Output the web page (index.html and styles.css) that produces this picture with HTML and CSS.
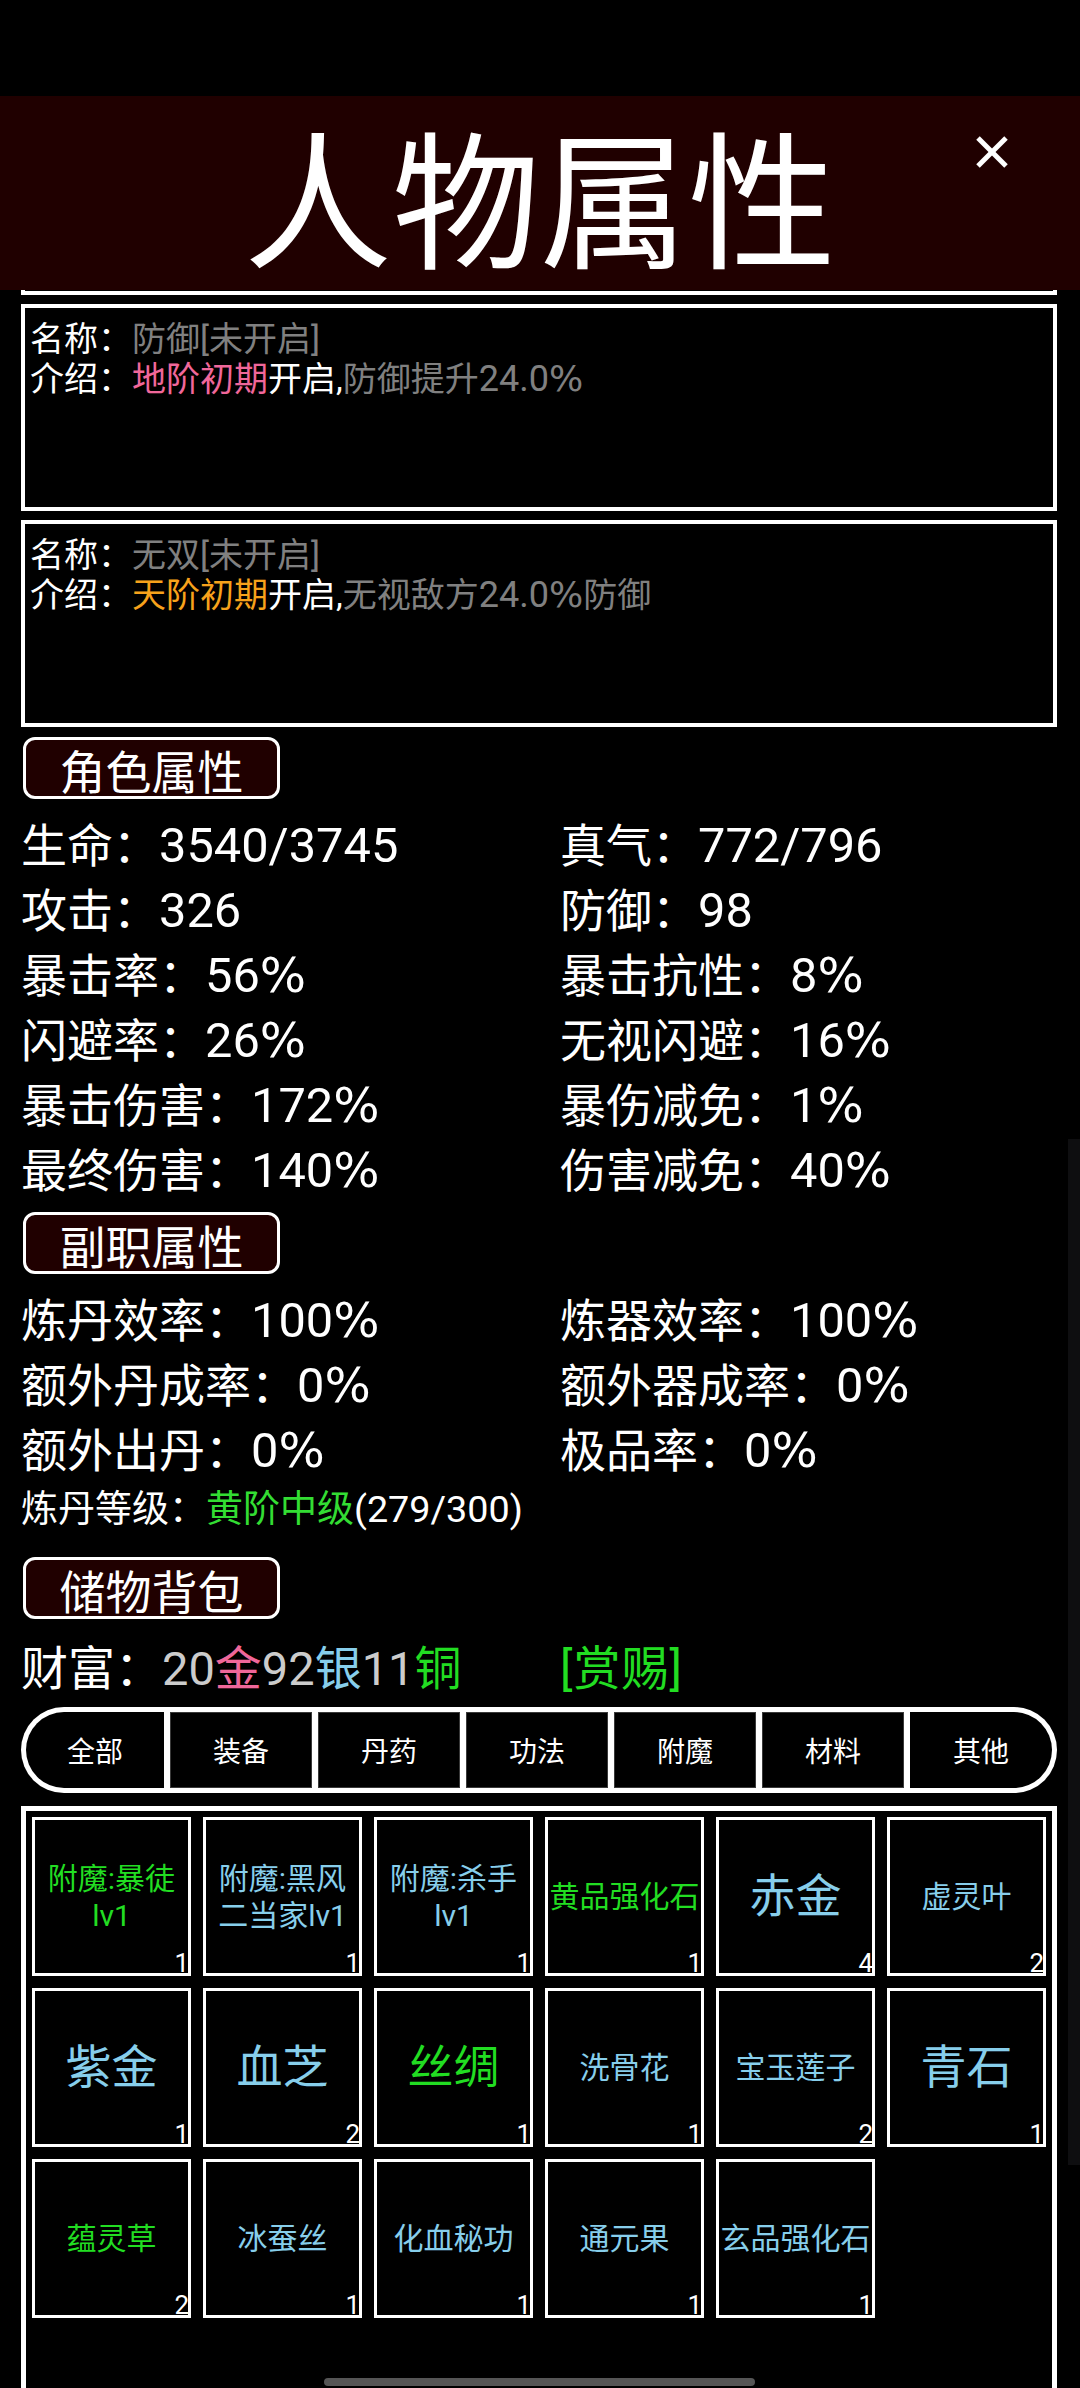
FILE: index.html
```html
<!DOCTYPE html>
<html lang="zh-CN">
<head>
<meta charset="utf-8">
<title>人物属性</title>
<link rel="stylesheet" href="styles.css">
</head>
<body>
<div class="screen">
  <div class="statusbar"></div>
  <header class="header">
    <h1 class="title">人物属性</h1>
    <svg class="close" viewBox="0 0 32 32" width="32" height="32" aria-label="关闭">
      <line x1="2" y1="2" x2="30" y2="30" stroke="#fff" stroke-width="5"/>
      <line x1="30" y1="2" x2="2" y2="30" stroke="#fff" stroke-width="5"/>
    </svg>
  </header>
  <main class="content">
    <div class="stub"></div>
    <div class="skill">
      <p><span class="w">名称：</span><span class="g">防御[未开启]</span></p>
      <p><span class="w">介绍：</span><span class="pink">地阶初期</span><span class="w">开启,</span><span class="g">防御提升<span class="n">24.0<span class="pc">%</span></span></span></p>
    </div>
    <div class="skill">
      <p><span class="w">名称：</span><span class="g">无双[未开启]</span></p>
      <p><span class="w">介绍：</span><span class="orange">天阶初期</span><span class="w">开启,</span><span class="g">无视敌方<span class="n">24.0<span class="pc">%</span></span>防御</span></p>
    </div>

    <div class="tag">角色属性</div>
    <div class="stats">
      <div>生命：<span class="n">3540/3745</span></div><div>真气：<span class="n">772/796</span></div>
      <div>攻击：<span class="n">326</span></div><div>防御：<span class="n">98</span></div>
      <div>暴击率：<span class="n">56<span class="pc">%</span></span></div><div>暴击抗性：<span class="n">8<span class="pc">%</span></span></div>
      <div>闪避率：<span class="n">26<span class="pc">%</span></span></div><div>无视闪避：<span class="n">16<span class="pc">%</span></span></div>
      <div>暴击伤害：<span class="n">172<span class="pc">%</span></span></div><div>暴伤减免：<span class="n">1<span class="pc">%</span></span></div>
      <div>最终伤害：<span class="n">140<span class="pc">%</span></span></div><div>伤害减免：<span class="n">40<span class="pc">%</span></span></div>
    </div>

    <div class="tag tag-tight">副职属性</div>
    <div class="stats">
      <div>炼丹效率：<span class="n">100<span class="pc">%</span></span></div><div>炼器效率：<span class="n">100<span class="pc">%</span></span></div>
      <div>额外丹成率：<span class="n">0<span class="pc">%</span></span></div><div>额外器成率：<span class="n">0<span class="pc">%</span></span></div>
      <div>额外出丹：<span class="n">0<span class="pc">%</span></span></div><div>极品率：<span class="n">0<span class="pc">%</span></span></div>
    </div>
    <div class="level">炼丹等级：<span class="lgreen">黄阶中级</span><span class="n">(279/300)</span></div>

    <div class="tag tag-bag">储物背包</div>
    <div class="wealth">
      <div>财富：<span class="num">20</span><span class="pink">金</span><span class="num">92</span><span class="blue">银</span><span class="num">11</span><span class="green">铜</span></div>
      <div class="green reward">[赏赐]</div>
    </div>

    <nav class="tabs">
      <div class="tab first">全部</div>
      <div class="tab">装备</div>
      <div class="tab">丹药</div>
      <div class="tab">功法</div>
      <div class="tab">附魔</div>
      <div class="tab">材料</div>
      <div class="tab last">其他</div>
    </nav>

    <div class="bag">
      <div class="item green sm">附魔:暴徒lv1<span class="cnt">1</span></div>
      <div class="item blue sm">附魔:黑风二当家lv1<span class="cnt">1</span></div>
      <div class="item blue sm">附魔:杀手lv1<span class="cnt">1</span></div>
      <div class="item green sm">黄品强化石<span class="cnt">1</span></div>
      <div class="item blue lg">赤金<span class="cnt">4</span></div>
      <div class="item blue sm">虚灵叶<span class="cnt">2</span></div>

      <div class="item blue lg">紫金<span class="cnt">1</span></div>
      <div class="item blue lg">血芝<span class="cnt">2</span></div>
      <div class="item green lg">丝绸<span class="cnt">1</span></div>
      <div class="item blue sm">洗骨花<span class="cnt">1</span></div>
      <div class="item blue sm">宝玉莲子<span class="cnt">2</span></div>
      <div class="item blue lg">青石<span class="cnt">1</span></div>

      <div class="item green sm">蕴灵草<span class="cnt">2</span></div>
      <div class="item blue sm">冰蚕丝<span class="cnt">1</span></div>
      <div class="item blue sm">化血秘功<span class="cnt">1</span></div>
      <div class="item blue sm">通元果<span class="cnt">1</span></div>
      <div class="item blue sm">玄品强化石<span class="cnt">1</span></div>
    </div>
  </main>
  <div class="scrollbar"></div>
  <div class="home"></div>
</div>
</body>
</html>
```

FILE: styles.css
```css
* { box-sizing: border-box; }

html, body {
  margin: 0;
  padding: 0;
  background: #000;
}

body {
  font-family: Roboto, "Noto Sans CJK SC", sans-serif;
  color: #fff;
}

.screen {
  position: relative;
  width: 1080px;
  height: 2388px;
  overflow: hidden;
  background: #000;
}

.statusbar {
  height: 96px;
  background: #000;
}

.header {
  position: relative;
  height: 194px;
  background: #200000;
  display: flex;
  align-items: center;
  justify-content: center;
}

.title {
  margin: 0;
  padding-top: 0;
  font-family: "Noto Sans CJK SC", sans-serif;
  font-weight: 400;
  font-size: 148px;
  line-height: 1;
  color: #fff;
}

.close {
  position: absolute;
  left: 976px;
  top: 40px;
  width: 32px;
  height: 32px;
}

.content {
  padding: 0 23px 0 21px;
}

.stub {
  height: 5px;
  border: 4px solid #fff;
  border-top: 0;
  margin-bottom: 9px;
}

.skill {
  height: 207px;
  border: 4px solid #fff;
  padding: 11px 5px;
  margin-bottom: 9px;
}

.skill p {
  margin: 0;
  font-size: 34px;
  line-height: 40px;
  white-space: nowrap;
}

/* numbers render a touch larger than the CJK text */
.n {
  font-size: 1.06em;
  line-height: 1;
}

.pc {
  font-family: "DejaVu Sans", sans-serif;
  font-size: 1em;
  line-height: 1;
}

.w { color: #fff; }
.g { color: #808080; }
.pink { color: #f0679a; }
.orange { color: #f7a21b; }
.blue { color: #87ceeb; }
.green { color: #22dd22; }
.lgreen { color: #33dd33; }
.num { color: #cccccc; }

.tag {
  width: 257px;
  height: 62px;
  margin: 10px 0 0 2px;
  border: 3px solid #fff;
  border-radius: 12px;
  background: #200000;
  display: flex;
  align-items: center;
  justify-content: center;
  font-size: 46px;
  line-height: 1;
  font-family: "Noto Sans CJK SC", sans-serif;
  padding-top: 2px;
}

.tag-tight { margin-top: 8px; }
.tag-bag { margin-top: 25px; }

.stats {
  margin-top: 15px;
  display: grid;
  grid-template-columns: 539px 1fr;
  font-size: 46px;
  line-height: 65px;
  white-space: nowrap;
}

.level {
  margin-top: 4px;
  font-size: 37px;
  line-height: 44px;
  white-space: nowrap;
}

.level .n {
  font-size: 1.02em;
}

.wealth {
  margin-top: 17px;
  display: grid;
  grid-template-columns: 539px 1fr;
  font-size: 47px;
  line-height: 65px;
  white-space: nowrap;
}

.reward {
  letter-spacing: 1px;
}

.tabs {
  margin-top: 6px;
  height: 86px;
  background: #fff;
  border-radius: 43px;
  padding: 5px;
  display: flex;
  gap: 6px;
}

.tab {
  width: 142px;
  background: #000;
  display: flex;
  align-items: center;
  justify-content: center;
  font-size: 28px;
  box-shadow: inset 0 0 0 1px #3a3a3a;
}

.tab.first {
  flex: 1;
  border-radius: 38px 0 0 38px;
  box-shadow: none;
}

.tab.last {
  border-radius: 0 38px 38px 0;
  box-shadow: none;
}

.bag {
  margin-top: 13px;
  height: 700px;
  border: 5px solid #fff;
  padding: 6px;
  display: grid;
  grid-template-columns: repeat(6, 159px);
  grid-auto-rows: 159px;
  gap: 12px;
  align-content: start;
}

.item {
  position: relative;
  border: 3px solid #fff;
  background: #000;
  display: flex;
  align-items: center;
  justify-content: center;
  text-align: center;
}

.item.sm {
  font-size: 30px;
  line-height: 37px;
}

.item.lg {
  font-size: 46px;
  line-height: 1.2;
}

.cnt {
  position: absolute;
  right: -1px;
  bottom: -3px;
  font-family: Roboto, sans-serif;
  font-size: 26px;
  line-height: 1;
  color: #fff;
}

.scrollbar {
  position: absolute;
  left: 1068px;
  top: 1139px;
  width: 12px;
  height: 1026px;
  background: #0e0e10;
}

.home {
  position: absolute;
  left: 324px;
  top: 2378px;
  width: 431px;
  height: 8px;
  border-radius: 4px;
  background: #555;
}
```
